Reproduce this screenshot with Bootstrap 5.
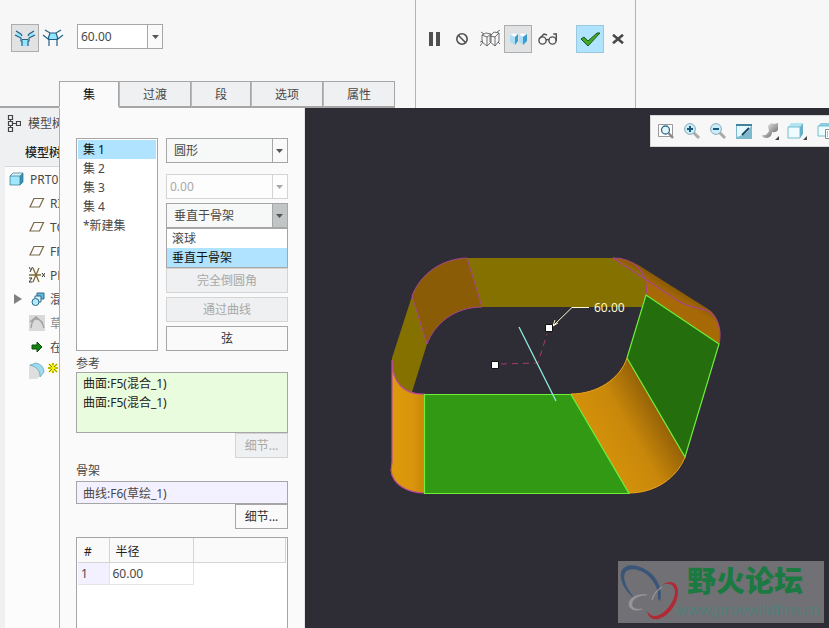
<!DOCTYPE html>
<html lang="zh-CN">
<head>
<meta charset="utf-8">
<meta name="viewport" content="width=device-width, initial-scale=1">
<title>PRT0</title>
<link href="https://cdn.jsdelivr.net/npm/bootstrap@5.3.0/dist/css/bootstrap.min.css" rel="stylesheet">
<style>
  :root { --line: #a6a6a6; --pale: #d4d4d4; --pick: #b0e3ff; --ink: #484848; }
  body { font-family: "Noto Sans", "Noto Sans CJK SC", sans-serif; font-size: 12px; line-height: 19px; color: var(--ink); background: #2e2d35; }
  button, input, select { font: inherit; color: inherit; border-radius: 0; }
  svg { display: block; flex: none; }
  .ribbon { background: #f7f7f7; height: 108px; }
  .ribbon-left { flex: 0 0 415px; }
  .ribbon-mid { flex: 0 0 221px; border-left: 1px solid #b4b4b4; border-right: 1px solid #b4b4b4; padding: 25px 0 0 4px; }
  .tools { padding: 24px 0 0 11px; }
  .tool { width: 28px; height: 28px; padding: 0; border: 1px solid transparent; background: none; display: flex; align-items: center; justify-content: center; }
  .tool.pressed { background: #e0e2e3; border-color: #adadad; }
  .tool.accept { background: #b0e3fd; border-color: #9cc8de; }
  .radius { width: 86px; height: 25px; margin-left: 10px; border: 1px solid var(--line); background: #fff; }
  .radius input { border: 0; padding: 0 3px; width: 69px; background: none; outline: 0; }
  .radius button { width: 16px; border: 0; border-left: 1px solid var(--line); background: #fafafa; padding: 0; display: flex; align-items: center; justify-content: center; }
  .tabline { width: 59px; border-bottom: 2px solid var(--line); }
  .set-tab { width: 72px; height: 27px; padding: 0; border: 1px solid var(--line); border-width: 1px 1px 2px; border-left-color: #b8b8b8; background: #eff0f1; }
  .set-tab.brief { width: 60px; }
  .set-tab.active { background: #fafafa; border-bottom-color: #fafafa; border-left-color: var(--line); color: #111; }
  .tree { flex: 0 0 60px; background: #eff0f1; overflow: hidden; white-space: nowrap; border-right: 1px solid #b0b0b0; }
  .tree-head { height: 30px; padding-left: 7px; gap: 7px; }
  .tree-title { height: 28px; padding-left: 25px; color: #222; }
  .tree-body { margin-left: 5px; background: #fcfcfc; border-top: 1px solid #d8d8d8; }
  .node { height: 24px; gap: 5px; padding-left: 24px; }
  .node.root { padding-left: 4px; }
  .node.group { padding-left: 9px; }
  .panel { flex: 0 0 245px; background: #fafafa; padding: 30px 16px 0 16px; border-right: 1px solid #e4e4e4; }
  .sets { width: 82px; margin-right: 8px; border: 1px solid var(--line); background: #fff; padding: 1px; }
  .sets button { display: block; width: 100%; height: 19px; line-height: 19px; text-align: left; border: 0; background: none; padding: 0 5px; }
  .sets button.on { background: var(--pick); color: #111; }
  .combo { appearance: none; display: block; width: 100%; height: 25px; padding: 0 20px 0 7px; border: 1px solid var(--line);
    background: #f7f8f8 url("data:image/svg+xml,%3Csvg xmlns='http://www.w3.org/2000/svg' width='15' height='23'%3E%3Cpath fill='%23fafafa' d='M0 0h15v23H0z'/%3E%3Cpath fill='%23a6a6a6' d='M0 0h1v23H0z'/%3E%3Cpath fill='%23555' d='M4 10h7l-3.500 4z'/%3E%3C/svg%3E") no-repeat right center; }
  .combo:disabled { opacity: 1; color: #a8a8a8; border-color: var(--pale); padding-left: 3px; background-color: #fdfdfd;
    background-image: url("data:image/svg+xml,%3Csvg xmlns='http://www.w3.org/2000/svg' width='15' height='23'%3E%3Cpath fill='%23d4d4d4' d='M0 0h1v23H0z'/%3E%3Cpath fill='%23a8a8a8' d='M4 10h7l-3.500 4z'/%3E%3C/svg%3E"); }
  .combo.open { background-image: url("data:image/svg+xml,%3Csvg xmlns='http://www.w3.org/2000/svg' width='15' height='23'%3E%3Cpath fill='%23c2c5c6' d='M0 0h15v23H0z'/%3E%3Cpath fill='%23a6a6a6' d='M0 0h1v23H0z'/%3E%3Cpath fill='%23555' d='M4 10h7l-3.500 4z'/%3E%3C/svg%3E"); }
  .shape { margin-bottom: 11px; }
  .conic { margin-bottom: 4px; }
  .method { margin-bottom: 40px; }
  .choices { position: absolute; top: 100%; left: 0; right: 0; z-index: 2; background: #fff; border: 1px solid var(--line); }
  .choices button { display: block; width: 100%; height: 19px; padding: 0 5px; border: 0; background: none; text-align: left; }
  .choices button.on { background: var(--pick); color: #111; }
  .act { display: block; height: 25px; padding: 0; border: 1px solid var(--line); background: #fafafa; color: #333; }
  .act:disabled { border-color: var(--pale); background: #eff0f1; color: #a8a8a8; }
  .details { width: 53px; margin-left: auto; }
  .caption { display: block; line-height: 17px; padding-top: 4px; }
  .caption.second { margin-bottom: 2px; }
  .refs { height: 61px; border: 1px solid var(--line); background: #e9fcdd; padding: 1px 6px; color: #222; }
  .spine { display: block; width: 100%; height: 23px; border: 1px solid var(--line); background: #f3f0ff; padding: 0 6px; }
  .radii { border: 1px solid var(--line); border-bottom: 0; background: #fff; margin-top: 8px; padding: 0 1px; }
  .radii table { width: 100%; table-layout: fixed; border-collapse: collapse; }
  .radii th { height: 24px; padding: 4px 6px 0; font-weight: 400; color: #222; line-height: 18px; background: #fafafa; border-right: 1px solid var(--pale); border-bottom: 1px solid var(--pale); }
  .radii td { height: 22px; padding: 1px 3px; border-right: 1px solid #e4e4e4; border-bottom: 1px solid #e4e4e4; color: var(--ink); }
  .radii td.num { background: #f3f0ff; }
  .radii td.void { border: 0; }
  .radii .c1 { width: 31px; }
  .radii .c2 { width: 84px; }
  .scene { position: relative; background: #2e2d35; min-width: 0; overflow: hidden; }
  .viewbar { position: absolute; top: 7px; right: 0; width: 179px; height: 32px; background: #f7f7f7; border: 1px solid #d8d8d8; border-right: 0; overflow: hidden; padding-left: 6px; gap: 8px; }
  .viewbar button { flex: none; width: 18px; height: 18px; padding: 0; border: 0; background: none; }
  .stamp { position: absolute; right: 5px; bottom: 5px; width: 206px; height: 62px; }
</style>
<script src="https://cdn.jsdelivr.net/npm/bootstrap@5.3.0/dist/js/bootstrap.bundle.min.js"></script>
</head>
<body>
<div class="d-flex flex-column vh-100 overflow-hidden">
  <header class="ribbon d-flex flex-shrink-0">
    <div class="ribbon-left d-flex flex-column justify-content-between">
      <div class="tools d-flex">
        <button class="tool pressed" type="button" aria-label="集模式">
          <svg width="22" height="20" viewBox="0 0 22 20"><path d="M3 4l4 3v3l-5-2zM19 4l-4 3v3l5-2zM8 11h6v7H8z" fill="#92e5fa"/><path d="M2 3l5 3M1 7l6 3v3h1v5M20 3l-5 3M21 7l-6 3v3h-1v5M7 6l1 2M15 6l-1 2M8 11.500h6" fill="none" stroke="#245f86" stroke-width="1.200"/></svg>
        </button>
        <button class="tool" type="button" aria-label="过渡模式">
          <svg width="22" height="20" viewBox="0 0 22 20"><path d="M8 5h6l2 6H6z" fill="#92e5fa"/><path d="M3 2l5 3h6l5-3M1 7l5 4h1v7M21 7l-5 4h-1v7M8 5l-2 6M14 5l2 6M6 11.500h10" fill="none" stroke="#245f86" stroke-width="1.200"/></svg>
        </button>
        <div class="radius d-flex">
          <input type="text" value="60.00" aria-label="半径">
          <button type="button" aria-label="半径列表"><svg width="7" height="4" viewBox="0 0 7 4"><path d="M0 0h7L3.500 4z" fill="#555"/></svg></button>
        </div>
      </div>
      <div class="d-flex" role="tablist">
        <div class="tabline"></div>
        <button class="set-tab brief active" type="button" role="tab" aria-selected="true">集</button>
        <button class="set-tab" type="button" role="tab">过渡</button>
        <button class="set-tab brief" type="button" role="tab">段</button>
        <button class="set-tab" type="button" role="tab">选项</button>
        <button class="set-tab" type="button" role="tab">属性</button>
      </div>
    </div>
    <div class="ribbon-mid d-flex align-items-start">
      <button class="tool" type="button" aria-label="暂停"><svg width="11" height="14"><path d="M0 0h4v14H0zM7 0h4v14H7z" fill="#505050"/></svg></button>
      <button class="tool" type="button" aria-label="无预览"><svg width="14" height="14" viewBox="0 0 14 14"><g fill="none" stroke="#505050" stroke-width="1.600"><circle cx="7" cy="7" r="5.200"/><path d="M3.300 3.300l7.400 7.400"/></g></svg></button>
      <button class="tool" type="button" aria-label="分离预览"><svg width="20" height="18" viewBox="0 0 20 18"><path d="M2 5l4-2 5 1-4 3zM2 5v7l5 4V7M11 4v8l-4 4M10 6l4-4 5 1-4 4zM10 6v6l5 4V7M19 3v8l-4 5M0 12l3-1M1 2l3 2M0 16l3-4M17 2l3-2M18 12l2 2" fill="none" stroke="#606060" stroke-width=".9"/></svg></button>
      <button class="tool pressed" type="button" aria-label="附着预览"><svg width="18" height="14" viewBox="0 0 18 14"><path d="M1 3l3-2 5 1-3 3zM10 3l3-2 5 1-4 3z" fill="#fff" stroke="#c8dce5" stroke-width=".5"/><path d="M1 3l5 2v8l-5-3zM10 3l4 2v8l-4-3z" fill="#a9def4"/><path d="M6 5l3-3v7l-3 4zM14 5l4-3v7l-4 4z" fill="#399ccc"/></svg></button>
      <button class="tool" type="button" aria-label="检验"><svg class="ms-1" width="20" height="14" viewBox="0 0 20 14"><g fill="none" stroke="#505050" stroke-width="1.400"><circle cx="4.500" cy="8.500" r="3.600"/><circle cx="14.500" cy="8.500" r="3.600"/><path d="M8 8q1.500-1 3 0M1 7l5-5 3 1M18.300 9V2h-3"/></g></svg></button>
      <button class="tool accept ms-3" type="button" aria-label="确定"><svg width="20" height="15" viewBox="0 0 20 15"><path d="M1 7l3-2 4 4L17 1h3L8 14z" fill="#3faa22" stroke="#1d5522" stroke-width="1"/></svg></button>
      <button class="tool" type="button" aria-label="取消"><svg width="12" height="10" viewBox="0 0 12 10"><path d="M1 .8l10 8.400M11 .8L1 9.200" stroke="#484848" stroke-width="2.600"/></svg></button>
    </div>
  </header>

  <main class="d-flex flex-grow-1 overflow-hidden">
    <nav class="tree" aria-label="模型树">
      <div class="tree-head d-flex align-items-center">
        <svg width="14" height="19" viewBox="0 0 14 19"><path d="M1.500 1.500h4v4h-4zM1.500 7.500h4v4h-4zM1.500 13.500h4v4h-4zM9.500 7.500h4v4h-4zM5.500 9.500h4M3.500 5.500v2M3.500 11.500v2" fill="none" stroke="#444" stroke-width="1.200"/></svg>
        <span>模型树</span>
      </div>
      <div class="tree-title d-flex align-items-center fw-medium">模型树</div>
      <div class="tree-body h-100">
        <div class="node root d-flex align-items-center"><svg width="16" height="14" viewBox="0 0 16 14"><path d="M1 4l3-3h10l-3 3z" fill="#d8f6ff"/><path d="M1 4h10v9H1z" fill="#a1e7fb"/><path d="M11 4l3-3v9l-3 3z" fill="#3498bd"/><path d="M1 4l3-3h10v9l-3 3H1zM1 4h10v9M11 4l3-3" fill="none" stroke="#35708a" stroke-width=".7"/></svg><span>PRT0</span></div>
        <div class="node d-flex align-items-center"><svg width="16" height="12" viewBox="0 0 16 12"><path d="M5 1.500h9.500l-4 8.500H1z" fill="none" stroke="#7b684c" stroke-width="1.200"/></svg><span>RI</span></div>
        <div class="node d-flex align-items-center"><svg width="16" height="12" viewBox="0 0 16 12"><path d="M5 1.500h9.500l-4 8.500H1z" fill="none" stroke="#7b684c" stroke-width="1.200"/></svg><span>TO</span></div>
        <div class="node d-flex align-items-center"><svg width="16" height="12" viewBox="0 0 16 12"><path d="M5 1.500h9.500l-4 8.500H1z" fill="none" stroke="#7b684c" stroke-width="1.200"/></svg><span>FR</span></div>
        <div class="node d-flex align-items-center"><svg width="16" height="18" viewBox="0 0 16 18"><path d="M0 9h12M4 2l6 14M10 2L4 16" stroke="#7b6a35" stroke-width="1.300"/><path d="M0 1l1.500 2.500M3.500 1L1 6M0 12h3l-3 4h3.500M13 7l3 4M16 7l-3 4" fill="none" stroke="#333"/></svg><span>PR</span></div>
        <div class="node group d-flex align-items-center"><svg width="8" height="10"><path d="M0 0l8 5-8 5z" fill="#808080"/></svg><svg class="ms-1" width="14" height="16" viewBox="0 0 14 16"><path d="M6 2h7v6H6z" fill="#63b8d9" stroke="#286d8c"/><path d="M4 5h6v6H4z" fill="#d5f2fb" stroke="#286d8c"/><circle cx="4.500" cy="11" r="3.500" fill="#b5e9f8" stroke="#286d8c"/></svg><span>混</span></div>
        <div class="node d-flex align-items-center"><svg width="16" height="16" viewBox="0 0 16 16"><path d="M0 0h16v16H0z" fill="#dadada"/><path d="M2 13Q3 3 8 4t7 9M1 7l6-5 7 6" fill="none" stroke="#a2a2a2" stroke-width="1.400"/></svg><span class="text-black-50">草</span></div>
        <div class="node d-flex align-items-center"><svg width="16" height="12" viewBox="0 0 16 12"><path d="M3 4h5V1l5 5-5 5V8H3z" fill="#138213" stroke="#0a500d"/></svg><span>在</span></div>
        <div class="node d-flex align-items-center"><svg width="30" height="18" viewBox="0 0 30 18"><path d="M0 3h7q6 1 6 9l-5 5H0z" fill="#dedede"/><path d="M1 3l6-2q8 2 8 9l-4 5q1-9-10-12z" fill="#9bdcf1" stroke="#5f9fb7" stroke-width=".7"/><path d="M20 2l8 8M28 2l-8 8M19 6h10M24 1v10" stroke="#f3ee00" stroke-width="2"/><path d="M20 2l3 3M28 2l-3 3M20 10l3-3M28 10l-3-3M19 6h3M26 6h3M24 1v2M24 9v2" stroke="#6d6d00" stroke-width=".8"/></svg></div>
      </div>
    </nav>

    <section class="panel d-flex flex-column" aria-label="集">
      <div class="d-flex flex-shrink-0">
        <div class="sets flex-shrink-0">
          <button class="on" type="button">集 1</button>
          <button type="button">集 2</button>
          <button type="button">集 3</button>
          <button type="button">集 4</button>
          <button type="button">*新建集</button>
        </div>
        <div class="flex-grow-1">
          <select class="combo shape" aria-label="截面形状"><option>圆形</option></select>
          <select class="combo conic" aria-label="圆锥参数" disabled><option>0.00</option></select>
          <div class="method position-relative">
            <select class="combo open" aria-label="创建方法"><option>垂直于骨架</option><option>滚球</option></select>
            <div class="choices">
              <button type="button">滚球</button>
              <button class="on" type="button">垂直于骨架</button>
            </div>
          </div>
          <button class="act w-100 mb-1" type="button" disabled>完全倒圆角</button>
          <button class="act w-100 mb-1" type="button" disabled>通过曲线</button>
          <button class="act w-100" type="button">弦</button>
        </div>
      </div>
      <div class="caption">参考</div>
      <div class="refs flex-shrink-0">
        <div>曲面:F5(混合_1)</div>
        <div>曲面:F5(混合_1)</div>
      </div>
      <button class="act details flex-shrink-0" type="button" disabled>细节...</button>
      <label class="caption second" for="spine">骨架</label>
      <input class="spine flex-shrink-0" id="spine" type="text" value="曲线:F6(草绘_1)">
      <button class="act details flex-shrink-0" type="button">细节...</button>
      <div class="radii flex-grow-1">
        <table>
          <colgroup><col class="c1"><col class="c2"><col></colgroup>
          <thead><tr><th>#</th><th>半径</th><th></th></tr></thead>
          <tbody><tr><td class="num">1</td><td>60.00</td><td class="void"></td></tr></tbody>
        </table>
      </div>
    </section>

    <section class="scene flex-grow-1" aria-label="图形窗口">
      <svg width="100%" height="100%" viewBox="305 108 524 520">
        <defs>
          <linearGradient id="gRound" gradientUnits="userSpaceOnUse" x1="600" y1="443" x2="662" y2="407"><stop offset="0" stop-color="#d2900a"/><stop offset=".45" stop-color="#c9880a"/><stop offset="1" stop-color="#8d5c08"/></linearGradient>
          <linearGradient id="gLeft" x1="0" x2="1"><stop offset="0" stop-color="#dc9a0b"/><stop offset=".6" stop-color="#da960b"/><stop offset="1" stop-color="#c8860a"/></linearGradient>
          <linearGradient id="gTop" gradientUnits="userSpaceOnUse" x1="672" y1="318" x2="686" y2="294"><stop offset="0" stop-color="#a96a06"/><stop offset=".65" stop-color="#a56906"/><stop offset="1" stop-color="#8a5a05"/></linearGradient>
        </defs>
        <path d="M467 258H613C632 258 645 268 647 290L642 307H482z" fill="#857100"/>
        <path d="M412 296L392 358V375Q396 392 412 392L427 344z" fill="#857100"/>
        <path d="M467 258C440 259 420 275 412 296L427 344C435 323 455 307 482 307z" fill="#8a5c05" stroke="#a8478f"/>
        <path d="M613 258C625 258 634 262 643 268L708 309C718 315 722 329 719 344L646 295Q648 278 640 272z" fill="url(#gTop)"/>
        <path d="M613 258C633 258 649 271 646 295M613 258L677 300C688 308 698 307 708 311C718 317 722 330 719 344" fill="none" stroke="#aa4484" stroke-width="1.200"/>
        <path d="M392 360V462L391 470C392 484 407 493 425 493V394C404 395 392 383 392 360z" fill="url(#gLeft)"/>
        <path d="M425 394C404 395 392 383 392 360V462L391 470C392 484 407 493 425 493" fill="none" stroke="#bd4a9b" stroke-width="1.200"/>
        <path d="M571 394C597 394 620 379 627 358L685 457C677 478 655 493 629 493z" fill="url(#gRound)" stroke="#f0a31a"/>
        <path d="M425 394H571L629 493H425z" fill="#329914"/>
        <path d="M646 295L719 344L685 457L627 358z" fill="#246e0d"/>
        <path d="M424.500 493.500V394.500H571L629 493.500zM646 295L719 344L685 457L627 358z" fill="none" stroke="#70ee38" stroke-width="1.200"/>
        <path d="M501 364L538 363L547 334" fill="none" stroke="#a63c66" stroke-dasharray="6 5"/>
        <path d="M519 327L556 401" stroke="#91eee5" stroke-width="1.200"/>
        <path d="M589 307.500H572L553 326M553 326l2-6M553 326l5-3" fill="none" stroke="#fff9cf"/>
        <path d="M491.500 361.500h7v7h-7zM545.500 324.500h7v7h-7z" fill="#fff" stroke="#111"/>
        <text x="594" y="312" font-size="12" fill="#fff9cf">60.00</text>
      </svg>

      <div class="viewbar d-flex align-items-center" role="toolbar" aria-label="视图">
        <button type="button" aria-label="重新调整"><svg width="18" height="18" viewBox="0 0 18 18"><path d="M1.500 2.500h14v12h-14z" fill="#fff" stroke="#999"/><circle cx="8.500" cy="8" r="4" fill="#e0f5fc" stroke="#356d8d" stroke-width="1.300"/><path d="M11.500 11l4.500 5" stroke="#888" stroke-width="2.400"/></svg></button>
        <button type="button" aria-label="放大"><svg width="18" height="18" viewBox="0 0 18 18"><path d="M10 10l6 6" stroke="#aaa" stroke-width="3"/><circle cx="7" cy="7" r="5.400" fill="#c8eef9" stroke="#8baab8"/><path d="M7 4v6M4 7h6" stroke="#1c587b" stroke-width="2"/></svg></button>
        <button type="button" aria-label="缩小"><svg width="18" height="18" viewBox="0 0 18 18"><path d="M10 10l6 6" stroke="#aaa" stroke-width="3"/><circle cx="7" cy="7" r="5.400" fill="#c8eef9" stroke="#8baab8"/><path d="M4 7h6" stroke="#1c587b" stroke-width="2"/></svg></button>
        <button type="button" aria-label="重画"><svg width="18" height="18" viewBox="0 0 18 18"><path d="M1 2h16v15H1z" fill="#7fb9cd"/><path d="M2 4h14q-3 8-14 11z" fill="#e4f8ff"/><path d="M1 2h16v2H1z" fill="#44829c"/><path d="M7 13l7-7" fill="none" stroke="#164660" stroke-width="1.800"/></svg></button>
        <button type="button" aria-label="显示样式"><svg width="20" height="18" viewBox="0 0 20 18"><defs><linearGradient id="gGray" x1="0" y1="0" x2="1" y2="1"><stop offset="0" stop-color="#fff"/><stop offset=".6" stop-color="#999"/><stop offset="1" stop-color="#555"/></linearGradient></defs><path d="M7 4q3-4 6-2l4-1v7q-2 3-6 2 0 5-5 6-5 0-5-3 5 1 7-4z" fill="url(#gGray)"/><path d="M18 14v4h-4z" fill="#444"/></svg></button>
        <button type="button" aria-label="已保存方向"><svg width="20" height="18" viewBox="0 0 20 18"><path d="M1 5l3-4h12l-3 4z" fill="#b3e5f1"/><path d="M1 5h12v11H1z" fill="#effcff" stroke="#75bdd0"/><path d="M13 5l3-4v11l-3 4z" fill="#68b2c8"/><path d="M20 14v4h-4z" fill="#444"/></svg></button>
        <button class="ms-1" type="button" aria-label="视图管理器"><svg width="18" height="18" viewBox="0 0 18 18"><path d="M1 4l3-3h12l-3 3z" fill="#8accdd"/><path d="M1 4h12v10H1z" fill="#effcff" stroke="#75bdd0"/><path d="M8.500 7.500H17v9H8.500z" fill="#fff" stroke="#888"/><path d="M10 10h1M10 12h1M10 14h1M12 10h5M12 12h5M12 14h5" stroke="#777"/></svg></button>
      </div>

      <svg class="stamp" viewBox="0 0 206 62" role="img" aria-label="野火论坛">
        <path d="M0 0h206v62H0z" fill="#717074"/>
        <path d="M18 38C6 31 0 16 4 9C8 2 20 3 30 10C40 17 45 29 42 40L40 38C41 29 36 19 28 13C19 7 10 7 7 12C4 17 9 30 18 38z" fill="#3a5577"/>
        <path d="M44 24C52 18 60 21 60 31C60 43 50 56 40 58C34 59 30 56 29 50C33 56 38 56 43 53C51 48 57 38 57 31C57 24 51 21 44 24z" fill="#b02a36"/>
        <path d="M29 34C20 32 11 37 11 43C11 48 17 51 24 48C18 49 13 47 14 43C14 38 20 34 29 34z" fill="#97979b" stroke="#97979b" stroke-width=".6"/>
        <path d="M34 39Q36 31 44 26" fill="none" stroke="#97979b" stroke-width="1.200"/>
        <text x="69" y="31" font-family="Noto Sans CJK SC, sans-serif" font-weight="900" font-size="29" fill="#1b7a41">野火论坛</text>
        <text x="58" y="54" font-size="15" fill="#527f7b">www.proewildfire.cn</text>
      </svg>
    </section>
  </main>
</div>
</body>
</html>
